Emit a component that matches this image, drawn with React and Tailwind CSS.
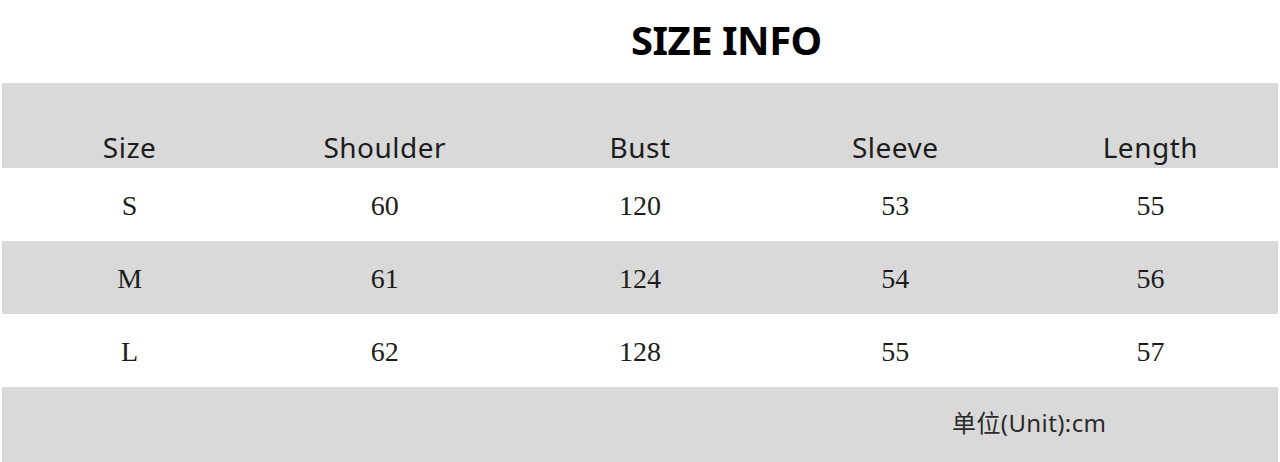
export default function App() {
  const rows = [
    ["S", "60", "120", "53", "55"],
    ["M", "61", "124", "54", "56"],
    ["L", "62", "128", "55", "57"],
  ];
  const heads = ["Size", "Shoulder", "Bust", "Sleeve", "Length"];
  const sans = { fontFamily: '"Noto Sans", "Noto Sans CJK SC", sans-serif' };
  return (
    <div className="w-[1280px] h-[462px] bg-white overflow-hidden flex flex-col text-[#1c1c1c]">
      <div className="h-[83px] flex items-center pl-[631px] pb-[4px]">
        <h1 className="text-[40px] font-bold text-black tracking-[-0.5px]" style={sans}>SIZE INFO</h1>
      </div>
      <div className="ml-[2px] mr-[2px] h-[85px] bg-[#d9d9d9] grid grid-cols-5 items-end pb-[1px]" style={sans}>
        {heads.map((h) => (
          <div key={h} className="text-center text-[28px] tracking-[0.5px] leading-[40px]">{h}</div>
        ))}
      </div>
      {rows.map((r, i) => (
        <div
          key={r[0]}
          className={`ml-[2px] mr-[2px] h-[73px] grid grid-cols-5 items-center ${i === 1 ? "bg-[#d9d9d9]" : "bg-white"}`}
          style={{ fontFamily: '"Liberation Serif", serif' }}
        >
          {r.map((c, j) => (
            <div key={j} className="text-center text-[28px] pt-[2px]">{c}</div>
          ))}
        </div>
      ))}
      <div className="ml-[2px] mr-[2px] flex-1 bg-[#d9d9d9] flex items-center pl-[950px] pb-[4px]">
        <span className="text-[24px] tracking-[0.4px] text-[#2a2a2a]" style={sans}>单位(Unit):cm</span>
      </div>
    </div>
  );
}
